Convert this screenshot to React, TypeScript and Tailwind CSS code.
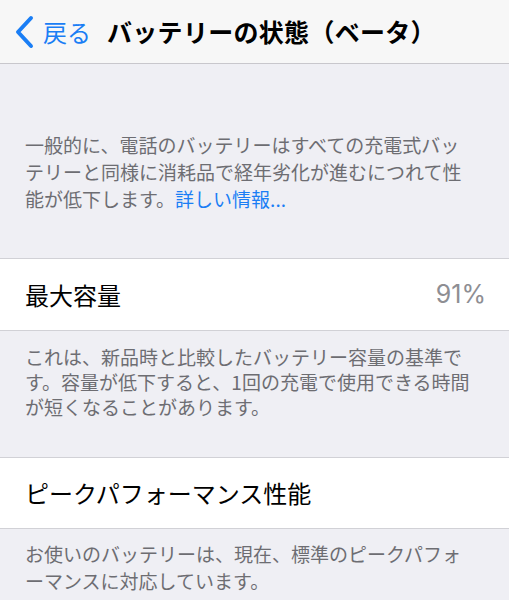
export default function App() {
  return (
    <div
      className="w-[509px] h-[600px] overflow-hidden bg-[#efeff4]"
      style={{ fontFamily: '"Noto Sans CJK JP", "Noto Sans", sans-serif' }}
    >
      {/* Navigation bar */}
      <div className="h-[64px] bg-[#f7f7f7] border-b border-[#c8c7cc] flex items-center">
        <div className="flex items-center pl-[13px] text-[#1a7ef5]">
          <svg width="22" height="34" viewBox="0 0 22 34" fill="none">
            <path d="M18 3 L5 17 L18 31" stroke="currentColor" strokeWidth="4" strokeLinecap="round" strokeLinejoin="round" />
          </svg>
          <span className="ml-[8px] text-[24px] leading-none">戻る</span>
        </div>
        <div className="ml-[16px] text-[25px] leading-none font-bold text-black tracking-[0.3px]">バッテリーの状態（ベータ）</div>
      </div>

      {/* Intro text */}
      <p className="pt-[67px] pl-[25px] pr-[34px] text-[19px] leading-[27px] text-[#6d6d72]">
        一般的に、電話のバッテリーはすべての充電式バッテリーと同様に消耗品で経年劣化が進むにつれて性能が低下します。
        <span className="text-[#1a7ef5]">詳しい情報...</span>
      </p>

      {/* Maximum capacity */}
      <div className="mt-[46px] h-[73px] bg-white border-y border-[#d1d1d6] flex items-center justify-between pl-[25px] pr-[23px]">
        <span className="text-[24px] text-black">最大容量</span>
        <span className="text-[25px] text-[#8e8e93]" style={{ fontFamily: 'Inter, "Noto Sans", sans-serif' }}>91%</span>
      </div>
      <p className="pt-[13px] pl-[25px] pr-[34px] text-[19px] leading-[25px] text-[#6d6d72]">
        これは、新品時と比較したバッテリー容量の基準です。容量が低下すると、1回の充電で使用できる時間が短くなることがあります。
      </p>

      {/* Peak performance */}
      <div className="mt-[38px] h-[72px] bg-white border-y border-[#d1d1d6] flex items-center pl-[25px]">
        <span className="text-[24px] text-black">ピークパフォーマンス性能</span>
      </div>
      <p className="pt-[11px] pl-[25px] pr-[34px] text-[19px] leading-[27px] text-[#6d6d72]">
        お使いのバッテリーは、現在、標準のピークパフォーマンスに対応しています。
      </p>
    </div>
  );
}
